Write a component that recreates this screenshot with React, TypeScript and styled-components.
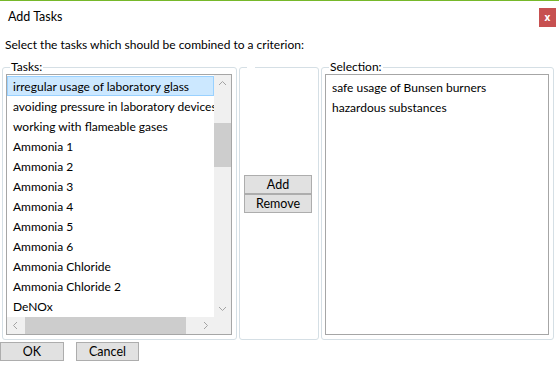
import React from "react";
import styled, { createGlobalStyle } from "styled-components";

const tasks = [
  "irregular usage of laboratory glass",
  "avoiding pressure in laboratory devices",
  "working with flameable gases",
  "Ammonia 1",
  "Ammonia 2",
  "Ammonia 3",
  "Ammonia 4",
  "Ammonia 5",
  "Ammonia 6",
  "Ammonia Chloride",
  "Ammonia Chloride 2",
  "DeNOx",
];

const selection = ["safe usage of Bunsen burners", "hazardous substances"];

const GlobalStyle = createGlobalStyle`
  html, body {
    margin: 0;
    padding: 0;
    background: #fff;
  }
  body {
    font-family: "Segoe UI", Lato, "Noto Sans", sans-serif;
    font-size: 12px;
    color: #000;
  }
`;

const Window = styled.div`
  width: 559px;
  height: 372px;
  box-sizing: border-box;
  border-top: 1px solid #76b82a;
  display: flex;
  flex-direction: column;
  background: #fff;
`;

const TitleBar = styled.div`
  height: 32px;
  display: flex;
  align-items: flex-start;
  justify-content: space-between;
`;

const Title = styled.div`
  padding: 8px 0 0 8px;
  line-height: 16px;
  font-size: 12.5px;
`;

const Close = styled.button`
  width: 17px;
  height: 19px;
  margin: 7px 3px 0 0;
  padding: 0;
  border: 0;
  background: #c75050;
  color: #fff;
  font: bold 10px "Segoe UI", "Noto Sans", sans-serif;
  line-height: 19px;
`;

const Instruction = styled.div`
  padding: 4px 0 0 5px;
  line-height: 16px;
  height: 23px;
`;

const Groups = styled.div`
  display: grid;
  grid-template-columns: 235px 80px 233px;
  gap: 2px;
  padding-left: 2px;
`;

const Group = styled.fieldset`
  margin: 0;
  height: 280px;
  box-sizing: border-box;
  border: 1px solid #d5dfe5;
  border-radius: 3px;
  padding: 0 4px 4px 3px;
  display: flex;
  flex-direction: column;
  min-width: 0;
`;

const Legend = styled.legend`
  padding: 0 1px;
  margin-left: 4px;
  line-height: 14px;
  height: 14px;
`;

const EmptyLegend = styled(Legend)`
  width: 6px;
`;

const ListBox = styled.div`
  flex: 1;
  border: 1px solid #a6a6a6;
  overflow: hidden;
  display: grid;
  grid-template-columns: 1fr 17px;
  grid-template-rows: 1fr 17px;
`;

const Items = styled.div`
  overflow: hidden;
  white-space: nowrap;
  padding-top: 1px;
`;

const Item = styled.div<{ $selected?: boolean }>`
  height: 20px;
  line-height: 19px;
  padding-left: 5px;
  box-sizing: border-box;
  border: 1px solid ${({ $selected }) => ($selected ? "#99d1ff" : "transparent")};
  background: ${({ $selected }) => ($selected ? "#cce8ff" : "transparent")};
`;

const VScroll = styled.div`
  background: #f0f0f0;
  display: grid;
  grid-template-rows: 17px 1fr 17px;
`;

const HScroll = styled.div`
  background: #f0f0f0;
  display: grid;
  grid-template-columns: 17px 1fr 17px;
`;

const Corner = styled.div`
  background: #f0f0f0;
`;

const Arrow = styled.div`
  display: flex;
  align-items: center;
  justify-content: center;
`;

const Track = styled.div<{ $vertical?: boolean }>`
  display: flex;
  flex-direction: ${({ $vertical }) => ($vertical ? "column" : "row")};
`;

const Thumb = styled.div`
  background: #cdcdcd;
`;

const Middle = styled.div`
  display: flex;
  flex-direction: column;
  padding: 101px 2px 0 1px;
`;

const SideButton = styled.button`
  height: 19px;
  padding: 0;
  box-sizing: border-box;
  border: 1px solid #adadad;
  background: #e1e1e1;
  font: inherit;
  font-size: 12.5px;
  line-height: 16px;
  color: #000;
`;

const SelectionList = styled.div`
  flex: 1;
  border: 1px solid #a6a6a6;
  padding-top: 3px;
`;

const SelectionItem = styled.div`
  height: 20px;
  line-height: 20px;
  padding-left: 6px;
`;

const Footer = styled.div`
  display: flex;
  gap: 12px;
  padding-top: 2px;
`;

const DialogButton = styled.button<{ $width: number }>`
  width: ${({ $width }) => $width}px;
  height: 19px;
  padding: 0;
  box-sizing: border-box;
  border: 1px solid #adadad;
  background: #e1e1e1;
  font: inherit;
  font-size: 12.5px;
  line-height: 16px;
  color: #000;
`;

const Chevron = ({ dir }: { dir: "up" | "down" | "left" | "right" }) => {
  const pts = {
    up: "1,6 4.5,2.5 8,6",
    down: "1,3 4.5,6.5 8,3",
    left: "6,1 2.5,4.5 6,8",
    right: "3,1 6.5,4.5 3,8",
  }[dir];
  return (
    <svg width="9" height="9" viewBox="0 0 9 9">
      <polyline points={pts} fill="none" stroke="#a3a3a3" strokeWidth="1" />
    </svg>
  );
};

export default function App() {
  return (
    <>
      <GlobalStyle />
      <Window>
        <TitleBar>
          <Title>Add Tasks</Title>
          <Close>x</Close>
        </TitleBar>
        <Instruction>Select the tasks which should be combined to a criterion:</Instruction>
        <Groups>
          <Group>
            <Legend>Tasks:</Legend>
            <ListBox>
              <Items>
                {tasks.map((t, i) => (
                  <Item key={t} $selected={i === 0}>
                    {t}
                  </Item>
                ))}
              </Items>
              <VScroll>
                <Arrow>
                  <Chevron dir="up" />
                </Arrow>
                <Track $vertical>
                  <div style={{ height: 31 }} />
                  <Thumb style={{ height: 44 }} />
                </Track>
                <Arrow>
                  <Chevron dir="down" />
                </Arrow>
              </VScroll>
              <HScroll>
                <Arrow>
                  <Chevron dir="left" />
                </Arrow>
                <Track>
                  <div style={{ width: 1 }} />
                  <Thumb style={{ width: 161 }} />
                </Track>
                <Arrow>
                  <Chevron dir="right" />
                </Arrow>
              </HScroll>
              <Corner />
            </ListBox>
          </Group>
          <Group>
            <EmptyLegend />
            <Middle>
              <SideButton>Add</SideButton>
              <SideButton>Remove</SideButton>
            </Middle>
          </Group>
          <Group>
            <Legend>Selection:</Legend>
            <SelectionList>
              {selection.map((s) => (
                <SelectionItem key={s}>{s}</SelectionItem>
              ))}
            </SelectionList>
          </Group>
        </Groups>
        <Footer>
          <DialogButton $width={64}>OK</DialogButton>
          <DialogButton $width={63}>Cancel</DialogButton>
        </Footer>
      </Window>
    </>
  );
}
